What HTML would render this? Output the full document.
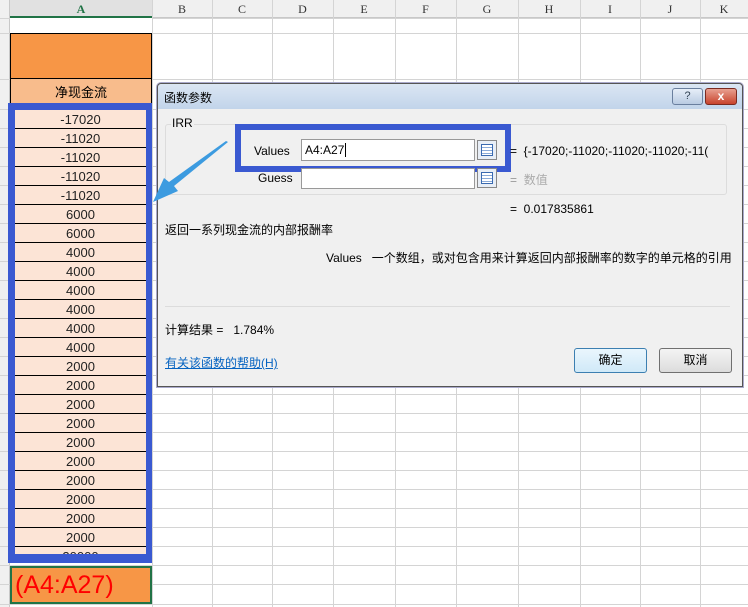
<!DOCTYPE html>
<html><head><meta charset="utf-8"><style>
*{margin:0;padding:0;box-sizing:border-box}
body{width:748px;height:607px;overflow:hidden;background:#fff;position:relative;font-family:"Liberation Sans","Noto Sans CJK SC",sans-serif;font-size:12px;color:#000}
.a{position:absolute}
.hl{position:absolute;height:1px;background:#d4d4d4;left:0;width:748px}
.vl{position:absolute;width:1px;background:#d4d4d4;top:0;height:607px}
.ch{position:absolute;top:0;height:18px;line-height:18px;text-align:center;font-family:"Liberation Serif",serif;font-size:12px;color:#333}
.cell{position:absolute;left:15px;width:131px;height:19px;background:#fce4d6;border-bottom:1px solid #000;text-align:center;line-height:19px;font-size:13px;color:#222}
.btn{position:absolute;height:25px;width:73px;border:1px solid #707070;border-radius:3px;background:linear-gradient(#f4f4f4,#dcdcdc);text-align:center;line-height:23px;font-size:12px}
</style></head><body>
<div class="a" style="left:0;top:0;width:748px;height:18px;background:#f0f0f0;border-bottom:1px solid #c8c8c8"></div>
<div class="a" style="left:10px;top:0;width:142px;height:18px;background:#e1e1e1;border-bottom:2px solid #217346"></div>
<div class="a" style="left:0;top:0;width:10px;height:607px;background:#f0f0f0;border-right:1px solid #c8c8c8"></div>
<div id="g"></div>
<div class="ch" style="left:10px;width:142px;color:#217346;font-weight:bold">A</div>
<div class="ch" style="left:152px;width:60px">B</div>
<div class="ch" style="left:212px;width:60px">C</div>
<div class="ch" style="left:272px;width:61px">D</div>
<div class="ch" style="left:333px;width:62px">E</div>
<div class="ch" style="left:395px;width:61px">F</div>
<div class="ch" style="left:456px;width:62px">G</div>
<div class="ch" style="left:518px;width:62px">H</div>
<div class="ch" style="left:580px;width:60px">I</div>
<div class="ch" style="left:640px;width:60px">J</div>
<div class="ch" style="left:700px;width:48px">K</div>
<div class="a" style="left:10px;top:18px;width:142px;height:15px;background:#fff"></div>
<div class="a" style="left:10px;top:33px;width:142px;height:46px;background:#f79646;border:1px solid #000"></div>
<div class="a" style="left:10px;top:78px;width:142px;height:28px;background:#f8bc8c;border:1px solid #000;text-align:center;line-height:28px;font-size:13px">净现金流</div>
<div class="a" style="left:8px;top:103px;width:144px;height:460px;background:#3a59d1"></div>
<div id="cells"></div>
<div class="a" style="left:10px;top:566px;width:142px;height:38px;background:#f79646;border:2px solid #217346;color:#ff0000;font-size:25px;line-height:34px;padding-left:3px">(A4:A27)</div>
<!-- dialog -->
<div class="a" style="left:157px;top:83px;width:586px;height:304px;background:#f0f0f0;border:1px solid #555;border-radius:4px 4px 0 0;box-shadow:0 0 0 1px #aac"></div>
<div class="a" style="left:158px;top:84px;width:584px;height:25px;background:linear-gradient(#dbe6f3,#c2d4ea);border-radius:4px 4px 0 0"></div>
<div class="a" style="left:164px;top:89px;font-size:12px">函数参数</div>
<div class="a" style="left:672px;top:88px;width:31px;height:17px;border:1px solid #6a7f9e;border-radius:3px;background:linear-gradient(#e6eef8,#b9cbe2);text-align:center;font-size:11px;line-height:15px;color:#345">?</div>
<div class="a" style="left:705px;top:88px;width:32px;height:17px;border:1px solid #7a2a20;border-radius:3px;background:linear-gradient(#e8a090,#c8432c);text-align:center;color:#fff;font-weight:bold;font-size:12px;line-height:15px">x</div>
<div class="a" style="left:165px;top:124px;width:562px;height:71px;border:1px solid #dcdcdc;border-radius:3px"></div>
<div class="a" style="left:171px;top:116px;font-size:12px;background:#f0f0f0;padding:0 1px">IRR</div>
<div class="a" style="left:235px;top:124px;width:276px;height:48px;background:#3a59d1"></div>
<div class="a" style="left:241px;top:130px;width:264px;height:36px;background:#f0f0f0"></div>
<div class="a" style="left:254px;top:144px">Values</div>
<div class="a" style="left:301px;top:139px;width:174px;height:22px;background:#fff;border:1px solid #999;padding:3px 3px;font-size:12px">A4:A27<span style="border-left:1px solid #000;margin-left:1px"></span></div>
<div class="a" style="left:258px;top:171px">Guess</div>
<div class="a" style="left:301px;top:168px;width:174px;height:21px;background:#fff;border:1px solid #999"></div>
<div class="a" style="left:477px;top:140px;width:20px;height:20px;border:1px solid #888;background:#e8eef6"><div style="margin:3px;width:12px;height:12px;border:1px solid #3a6ab0;background:repeating-linear-gradient(#fff 0 2px,#8aaad8 2px 3px)"></div></div>
<div class="a" style="left:477px;top:168px;width:20px;height:20px;border:1px solid #888;background:#e8eef6"><div style="margin:3px;width:12px;height:12px;border:1px solid #3a6ab0;background:repeating-linear-gradient(#fff 0 2px,#8aaad8 2px 3px)"></div></div>
<div class="a" style="left:510px;top:144px">=&nbsp;&nbsp;{-17020;-11020;-11020;-11020;-11(</div>
<div class="a" style="left:510px;top:171px;color:#999">=&nbsp;&nbsp;<span style="color:#aaa">数值</span></div>
<div class="a" style="left:510px;top:202px">=&nbsp;&nbsp;0.017835861</div>
<div class="a" style="left:165px;top:221px">返回一系列现金流的内部报酬率</div>
<div class="a" style="left:326px;top:249px">Values&nbsp;&nbsp;&nbsp;一个数组，或对包含用来计算返回内部报酬率的数字的单元格的引用</div>
<div class="a" style="left:165px;top:306px;width:565px;height:1px;background:#dcdcdc"></div>
<div class="a" style="left:165px;top:321px">计算结果 =&nbsp;&nbsp;&nbsp;1.784%</div>
<div class="a" style="left:165px;top:354px;color:#0563c1;text-decoration:underline">有关该函数的帮助(H)</div>
<div class="btn" style="left:574px;top:348px;border-color:#3c7fb1;background:linear-gradient(#eaf6fd,#d0e9f8)">确定</div>
<div class="btn" style="left:659px;top:348px">取消</div>
<svg class="a" style="left:150px;top:140px;z-index:5" width="80" height="70"><path d="M78 2 L24 46 L28 51 L3 62 L14 38 L19 42 L76 1 Z" fill="#3c9be0"/></svg>
<script>
var g=document.getElementById('g'),h='';
var ys=[18,33,79];for(var j=0;j<=25;j++)ys.push(109+19*j);ys.push(604);
ys.forEach(function(y){h+='<div class="hl" style="top:'+y+'px"></div>'});
[152,212,272,333,395,456,518,580,640,700].forEach(function(x){h+='<div class="vl" style="left:'+x+'px"></div>'});
g.innerHTML=h;
var v=[-17020,-11020,-11020,-11020,-11020,6000,6000,4000,4000,4000,4000,4000,4000,2000,2000,2000,2000,2000,2000,2000,2000,2000,2000,20000];
var c='';v.forEach(function(n,i){var t=110+19*i;c+='<div class="cell" style="top:'+t+'px;'+(i==23?'height:7px;line-height:19px;overflow:hidden;border:0':'')+'">'+n+'</div>'});
document.getElementById('cells').innerHTML=c;
</script>
</body></html>
